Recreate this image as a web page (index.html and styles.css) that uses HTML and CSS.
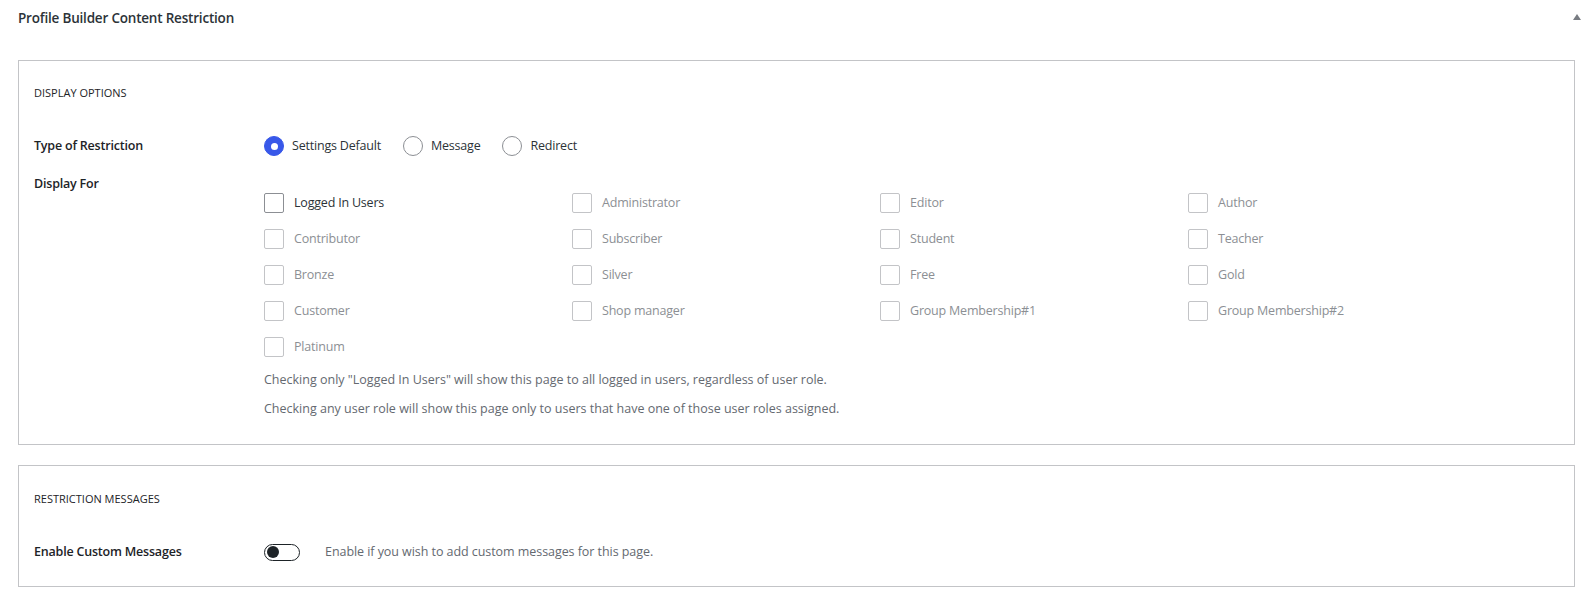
FILE: index.html
```html
<!DOCTYPE html>
<html>
<head>
<meta charset="utf-8">
<link rel="stylesheet" href="styles.css">
</head>
<body>
<div class="postbox">
  <div class="postbox-header">
    <h2 class="postbox-title">Profile Builder Content Restriction</h2>
    <span class="toggle-arrow"></span>
  </div>
  <div class="postbox-inside">
    <div class="panel panel-display">
      <h3 class="panel-title">DISPLAY OPTIONS</h3>
      <div class="field field-type">
        <div class="field-label">Type of Restriction</div>
        <div class="field-options radios">
          <label class="radio-opt"><span class="radio checked"></span><span class="opt-text">Settings Default</span></label>
          <label class="radio-opt"><span class="radio"></span><span class="opt-text">Message</span></label>
          <label class="radio-opt"><span class="radio"></span><span class="opt-text">Redirect</span></label>
        </div>
      </div>
      <div class="field field-display">
        <div class="field-label">Display For</div>
        <div class="field-options">
          <div class="check-grid">
            <label class="check-opt active"><span class="checkbox"></span><span class="opt-text">Logged In Users</span></label>
            <label class="check-opt"><span class="checkbox"></span><span class="opt-text">Administrator</span></label>
            <label class="check-opt"><span class="checkbox"></span><span class="opt-text">Editor</span></label>
            <label class="check-opt"><span class="checkbox"></span><span class="opt-text">Author</span></label>
            <label class="check-opt"><span class="checkbox"></span><span class="opt-text">Contributor</span></label>
            <label class="check-opt"><span class="checkbox"></span><span class="opt-text">Subscriber</span></label>
            <label class="check-opt"><span class="checkbox"></span><span class="opt-text">Student</span></label>
            <label class="check-opt"><span class="checkbox"></span><span class="opt-text">Teacher</span></label>
            <label class="check-opt"><span class="checkbox"></span><span class="opt-text">Bronze</span></label>
            <label class="check-opt"><span class="checkbox"></span><span class="opt-text">Silver</span></label>
            <label class="check-opt"><span class="checkbox"></span><span class="opt-text">Free</span></label>
            <label class="check-opt"><span class="checkbox"></span><span class="opt-text">Gold</span></label>
            <label class="check-opt"><span class="checkbox"></span><span class="opt-text">Customer</span></label>
            <label class="check-opt"><span class="checkbox"></span><span class="opt-text">Shop manager</span></label>
            <label class="check-opt"><span class="checkbox"></span><span class="opt-text">Group Membership#1</span></label>
            <label class="check-opt"><span class="checkbox"></span><span class="opt-text">Group Membership#2</span></label>
            <label class="check-opt"><span class="checkbox"></span><span class="opt-text">Platinum</span></label>
          </div>
          <p class="help first">Checking only "Logged In Users" will show this page to all logged in users, regardless of user role.</p>
          <p class="help">Checking any user role will show this page only to users that have one of those user roles assigned.</p>
        </div>
      </div>
    </div>
    <div class="panel panel-messages">
      <h3 class="panel-title">RESTRICTION MESSAGES</h3>
      <div class="field field-toggle">
        <div class="field-label">Enable Custom Messages</div>
        <div class="field-options toggle-row">
          <span class="switch"><span class="knob"></span></span>
          <span class="toggle-desc">Enable if you wish to add custom messages for this page.</span>
        </div>
      </div>
    </div>
  </div>
</div>
</body>
</html>
```

FILE: styles.css
```css
* { box-sizing: border-box; }
html, body { margin: 0; padding: 0; background: #fff; }
body {
  font-family: "Open Sans", "Noto Sans", sans-serif;
  font-size: 13px;
  color: #1d2327;
}
.postbox { width: 1596px; }
.postbox-header {
  height: 36px;
  padding: 0 15px 0 18px;
  display: flex;
  align-items: center;
  justify-content: space-between;
}
.postbox-title {
  margin: 0;
  font-size: 13.5px;
  font-weight: 600;
  color: #2c3338;
  line-height: 20px;
  letter-spacing: -0.2px;
}
.toggle-arrow {
  width: 0; height: 0;
  border-left: 4px solid transparent;
  border-right: 4px solid transparent;
  border-bottom: 6px solid #787c82;
  margin-top: -3px;
}
.postbox-inside {
  padding: 24px 21px 0 18px;
  display: flex;
  flex-direction: column;
  gap: 20px;
}
.panel {
  border: 1px solid #c3c4c7;
  padding: 24px 15px 0 15px;
}
.panel-display { padding-bottom: 26px; }
.panel-messages { padding-top: 25px; padding-bottom: 24px; }
.panel-title {
  margin: 0 0 35px 0;
  font-size: 11px;
  font-weight: 400;
  line-height: 16px;
  color: #1d2327;
}
.field { display: flex; }
.field-label {
  width: 230px;
  flex: none;
  font-weight: 600;
  font-size: 12.5px;
  line-height: 20px;
  color: #1d2327;
  letter-spacing: -0.2px;
}
.field-options { flex: 1; }
.radios { display: flex; align-items: center; }
.radio-opt { display: flex; align-items: center; margin-right: 22px; }
.radio {
  width: 20px; height: 20px;
  border-radius: 50%;
  border: 1px solid #8c8f94;
  background: #fff;
  margin-right: 8px;
  flex: none;
}
.radio.checked {
  background: #3858e9;
  border-color: #3858e9;
  display: flex;
  align-items: center;
  justify-content: center;
}
.radio.checked::after {
  content: "";
  width: 7px; height: 7px;
  border-radius: 50%;
  background: #fff;
}
.opt-text {
  font-size: 12.5px;
  line-height: 20px;
  letter-spacing: -0.2px;
  color: #2c3338;
}
.field-display { margin-top: 18px; }
.field-display .field-options { padding-top: 19px; }
.check-grid {
  display: grid;
  grid-template-columns: repeat(4, 308px);
  row-gap: 16px;
}
.check-opt { display: flex; align-items: center; height: 20px; }
.checkbox {
  width: 20px; height: 20px;
  border: 1px solid #c3c4c7;
  border-radius: 2px;
  background: #fff;
  margin-right: 10px;
  flex: none;
}
.check-opt .opt-text { color: #8c8f94; }
.check-opt.active .checkbox { border-color: #8c8f94; }
.check-opt.active .opt-text { color: #2c3338; }
.help {
  margin: 11px 0 0 0;
  font-size: 12.5px;
  line-height: 18px;
  color: #646970;
}
.help.first { margin-top: 14px; }
.toggle-row { display: flex; align-items: center; height: 20px; }
.switch {
  width: 36px; height: 17px;
  border: 1px solid #1d2327;
  border-radius: 9px;
  display: flex;
  align-items: center;
  padding-left: 2px;
  margin-right: 25px;
  flex: none;
}
.knob {
  width: 12px; height: 12px;
  border-radius: 50%;
  background: #1d2327;
}
.toggle-desc {
  font-size: 12.5px;
  line-height: 20px;
  color: #646970;
  letter-spacing: -0.06px;
}
```
